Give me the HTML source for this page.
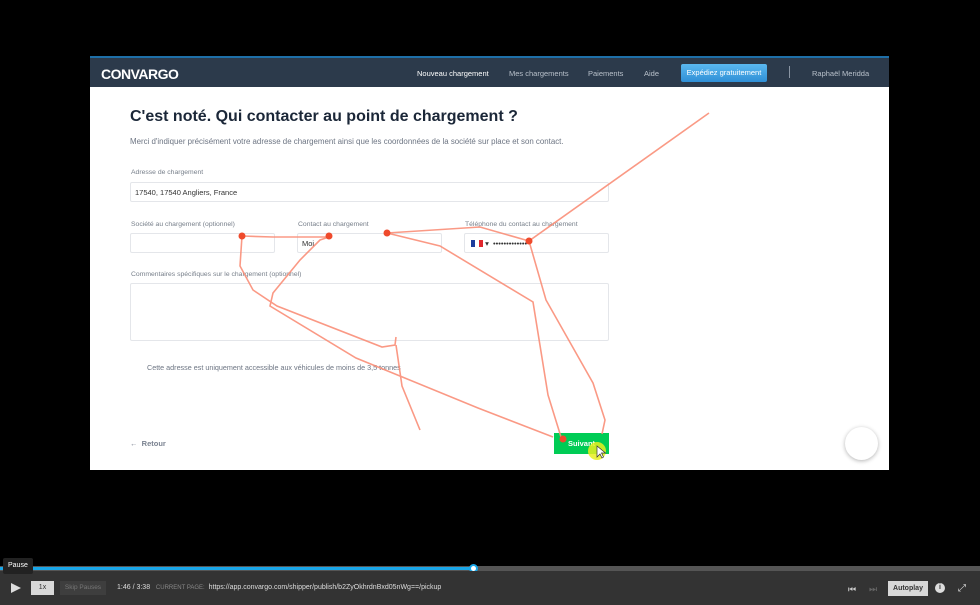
<!DOCTYPE html>
<html><head><meta charset="utf-8"><style>
*{margin:0;padding:0;box-sizing:border-box}
body{width:980px;height:605px;background:#000;font-family:"Liberation Sans",sans-serif;position:relative;overflow:hidden}
.frame{position:absolute;left:90px;top:56px;width:799px;height:414px;background:#fff}
.nav{position:absolute;left:0;top:0;width:799px;height:31px;background:#2c3a4b;border-top:2px solid #1e6fa8}
.logo{position:absolute;left:11px;top:8px;color:#fff;font-weight:bold;font-size:14px;letter-spacing:-0.5px}
.nav span{position:absolute;top:11px;font-size:7.5px;color:#b8c0ca}
.btn{position:absolute;left:591px;top:6px;width:86px;height:18px;background:linear-gradient(#5ab8f0,#2f8fd6);border-radius:2px;color:#fff;font-size:7.5px;text-align:center;line-height:18px}
h1{position:absolute;left:40px;top:52px;font-size:16px;color:#1b2738;font-weight:bold}
.p{position:absolute;font-size:7.5px;color:#6d7583}
.lbl{position:absolute;font-size:6.8px;color:#777f8a}
.in{position:absolute;border:1px solid #e4e6ea;border-radius:2px;background:#fff;font-size:7.5px;color:#333;padding-left:4px;line-height:19px}
.sv{position:absolute;left:464px;top:377px;width:55px;height:21px;background:#00cc55;color:#fff;font-size:7.5px;font-weight:bold;text-align:center;line-height:21px}
.bar{position:absolute;left:0;top:566px;width:980px;height:5px;background:#555}
.ctrl{position:absolute;left:0;top:571px;width:980px;height:34px;background:#333}
</style></head><body>
<div class="frame">
<div class="nav"><div class="logo">CONVARGO</div>
<span style="left:327px;color:#fff">Nouveau chargement</span>
<span style="left:419px">Mes chargements</span>
<span style="left:498px">Paiements</span>
<span style="left:554px">Aide</span>
<div class="btn">Expédiez gratuitement</div>
<span style="left:699px;top:8px;width:1px;height:12px;background:#8a95a3"></span>
<span style="left:722px">Raphaël Meridda</span>
</div>
<h1>C'est noté. Qui contacter au point de chargement ?</h1>
<div class="p" style="left:40px;top:81px;font-size:7.9px">Merci d'indiquer précisément votre adresse de chargement ainsi que les coordonnées de la société sur place et son contact.</div>
<div class="lbl" style="left:41px;top:113px">Adresse de chargement</div>
<div class="in" style="left:40px;top:126px;width:479px;height:20px">17540, 17540 Angliers, France</div>
<div class="lbl" style="left:41px;top:165px">Société au chargement (optionnel)</div>
<div class="in" style="left:40px;top:177px;width:145px;height:20px"></div>
<div class="lbl" style="left:208px;top:165px">Contact au chargement</div>
<div class="in" style="left:207px;top:177px;width:145px;height:20px">Moi</div>
<div class="lbl" style="left:375px;top:165px">Téléphone du contact au chargement</div>
<div class="in" style="left:374px;top:177px;width:145px;height:20px"><span style="display:inline-block;width:4px;height:7px;background:#1d3d9c;vertical-align:-1px;margin-left:2px"></span><span style="display:inline-block;width:4px;height:7px;background:#fff;vertical-align:-1px"></span><span style="display:inline-block;width:4px;height:7px;background:#e1262d;vertical-align:-1px"></span> ▾ &nbsp;•••••••••••••</div>
<div class="lbl" style="left:41px;top:215px">Commentaires spécifiques sur le chargement (optionnel)</div>
<div class="in" style="left:40px;top:227px;width:479px;height:58px"></div>
<div class="p" style="left:57px;top:307px;font-size:7.2px">Cette adresse est uniquement accessible aux véhicules de moins de 3,5 tonnes</div>
<div class="p" style="left:40px;top:383px;font-weight:bold;color:#7a8290">←&nbsp;&nbsp;Retour</div>
<div class="sv">Suivant</div>
</div>
<div style="position:absolute;left:845px;top:427px;width:33px;height:33px;border-radius:50%;background:#fff;box-shadow:0 1px 4px rgba(0,0,0,.3)"></div>
<svg style="position:absolute;left:0;top:0" width="980" height="605">
<g fill="none" stroke="#fa8f78" stroke-width="1.6" opacity="0.9">
<polyline points="709,113 529,241 546,300 593,383 605,420 602,434"/>
<polyline points="529,241 480,227 387,233 440,246 533,302 548,395 561,437"/>
<polyline points="242,236 273,237 329,237 320,240 300,260 273,293 270,306 356,358 478,408 553,437"/>
<polyline points="242,236 240,266 253,290 277,306 382,347 395,345 396,337"/>
<polyline points="396,345 402,386 420,430"/>
</g>
<g fill="#ef4a2c"><circle cx="242" cy="236" r="3.5"/><circle cx="329" cy="236" r="3.5"/><circle cx="387" cy="233" r="3.5"/><circle cx="529" cy="241" r="3.5"/><circle cx="563" cy="439" r="3.5"/></g>
<circle cx="597" cy="451" r="9" fill="#e8f020" opacity="0.85"/>
<path d="M597,446 l0,11 l3,-3 l2,4 l1.5,-1 l-2,-4 l4,0 z" fill="#fff" stroke="#333" stroke-width="0.7"/>
</svg>
<div class="bar"></div>
<div style="position:absolute;left:0;top:567px;width:473px;height:3px;background:#19a6e8"></div>
<div style="position:absolute;left:469px;top:564px;width:9px;height:9px;border-radius:50%;background:#fff;border:2px solid #19a6e8"></div>
<div class="ctrl"></div>
<div style="position:absolute;left:3px;top:558px;width:30px;height:16px;background:#222;color:#fff;font-size:7px;line-height:16px;padding-left:5px;border-radius:2px">Pause</div>
<svg style="position:absolute;left:10px;top:582px" width="12" height="12"><path d="M1,1 L11,6 L1,11 Z" fill="#ddd"/></svg>
<div style="position:absolute;left:31px;top:581px;width:23px;height:14px;background:#d8d8d8;font-size:7px;text-align:center;line-height:14px;color:#333">1x</div>
<div style="position:absolute;left:60px;top:581px;width:46px;height:14px;background:#3e3e3e;font-size:6.5px;text-align:center;line-height:14px;color:#777">Skip Pauses</div>
<div style="position:absolute;left:117px;top:584px;font-size:7px;color:#ddd">1:46 / 3:38 &nbsp;&nbsp;<span style="color:#888;font-size:6px">CURRENT PAGE:</span> &nbsp;https://app.convargo.com/shipper/publish/b2ZyOkhrdnBxd05nWg==/pickup</div>
<div style="position:absolute;left:848px;top:584px;font-size:9px;color:#ccc">⏮</div>
<div style="position:absolute;left:869px;top:584px;font-size:9px;color:#666">⏭</div>
<div style="position:absolute;left:888px;top:581px;width:40px;height:15px;background:#d8d8d8;font-size:7px;font-weight:bold;text-align:center;line-height:15px;color:#333">Autoplay</div>
<div style="position:absolute;left:935px;top:583px;width:10px;height:10px;border-radius:50%;background:#ddd;color:#333;font-size:7px;font-weight:bold;text-align:center;line-height:10px">i</div>
<div style="position:absolute;left:958px;top:583px;font-size:10px;color:#ddd">⤢</div>
</body></html>
